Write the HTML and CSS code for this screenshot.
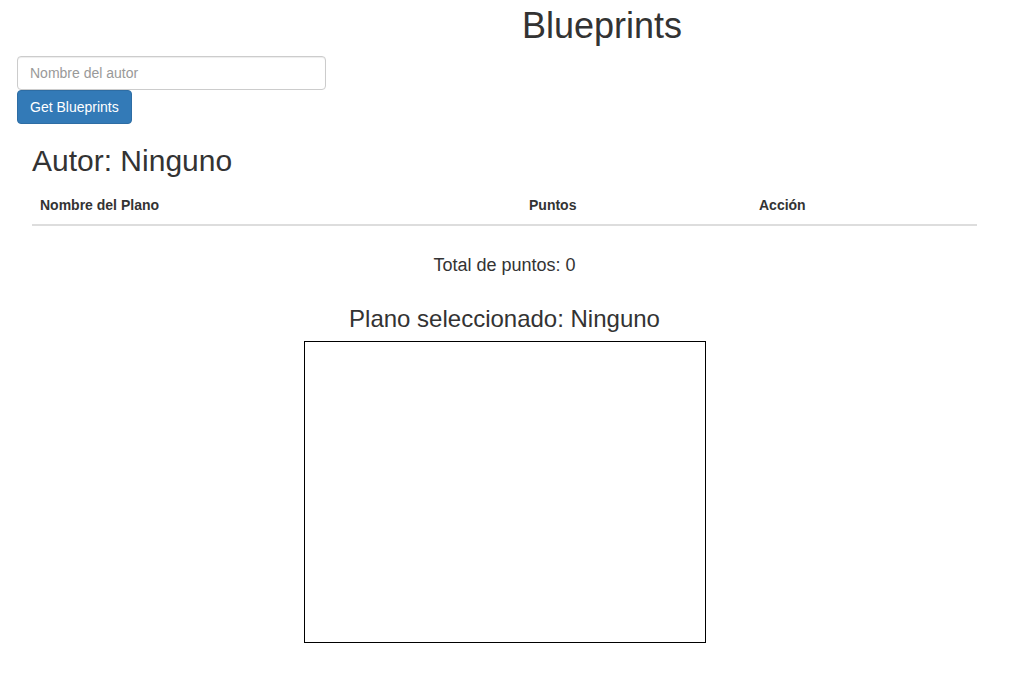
FILE: index.html
```html
<!DOCTYPE html>
<html lang="es">
<head>
<meta charset="utf-8">
<title>Blueprints</title>
<link rel="stylesheet" href="styles.css">
</head>
<body>
  <h1 class="title">Blueprints</h1>
  <div class="search">
    <input class="form-control" type="text" placeholder="Nombre del autor">
    <button class="btn btn-primary" type="button">Get Blueprints</button>
  </div>
  <div class="main">
    <h2 class="author">Autor: Ninguno</h2>
    <table class="table">
      <thead>
        <tr>
          <th class="col-name">Nombre del Plano</th>
          <th class="col-points">Puntos</th>
          <th class="col-action">Acción</th>
        </tr>
      </thead>
      <tbody></tbody>
    </table>
    <p class="total">Total de puntos: 0</p>
    <h3 class="selected">Plano seleccionado: Ninguno</h3>
    <canvas class="board" width="400" height="300"></canvas>
  </div>
</body>
</html>
```

FILE: styles.css
```css
* { box-sizing: border-box; }

html, body {
  margin: 0;
  padding: 0;
  background: #fff;
}

body {
  font-family: "Liberation Sans", Arial, sans-serif;
  font-size: 14px;
  line-height: 1.42857;
  color: #333;
}

.title {
  margin: 6px 0 0;
  padding-left: 185px;
  text-align: center;
  font-size: 36px;
  font-weight: 500;
  line-height: 1.1;
}

.search {
  padding: 10px 17px 0;
  display: flex;
  flex-direction: column;
  align-items: flex-start;
}

.form-control {
  display: block;
  width: 309px;
  height: 34px;
  padding: 6px 12px;
  font-family: inherit;
  font-size: 14px;
  color: #555;
  background: #fff;
  border: 1px solid #ccc;
  border-radius: 4px;
  box-shadow: inset 0 1px 1px rgba(0,0,0,.075);
  outline: none;
}

.form-control::placeholder { color: #999; }

.btn {
  display: inline-block;
  height: 34px;
  padding: 7px 12px 5px;
  font-family: inherit;
  font-size: 14px;
  line-height: 1.42857;
  border: 1px solid transparent;
  border-radius: 4px;
  cursor: pointer;
}

.btn-primary {
  color: #fff;
  background: #337ab7;
  border-color: #2e6da4;
}

.main {
  margin-left: 32px;
  width: 945px;
}

.author {
  margin: 20px 0 11px;
  font-size: 30px;
  font-weight: 500;
  line-height: 1.1;
}

.table {
  width: 100%;
  border-collapse: collapse;
  border-spacing: 0;
}

.table th {
  padding: 8px;
  text-align: left;
  font-weight: bold;
  line-height: 1.42857;
  border-bottom: 2px solid #ddd;
  vertical-align: bottom;
}

.col-name { width: 489px; }
.col-points { width: 230px; }
.col-action { width: 226px; }

.total {
  margin: 27px 0 0;
  text-align: center;
  font-size: 18px;
}

.selected {
  margin: 28px 0 8px;
  text-align: center;
  font-size: 24px;
  font-weight: 500;
  line-height: 1.1;
}

.board {
  display: block;
  margin: 0 auto;
  border: 1px solid #000;
  width: 402px;
  height: 302px;
}
```
